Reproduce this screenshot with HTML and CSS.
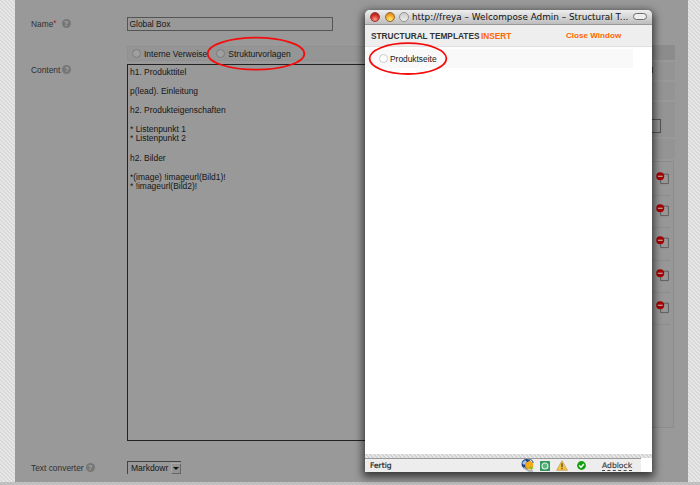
FILE: index.html
```
<!DOCTYPE html>
<html lang="en">
<head>
<meta charset="utf-8">
<title>Welcompose Admin</title>
<link rel="stylesheet" href="styles.css">
</head>
<body>
<svg class="defs" width="0" height="0">
  <symbol id="remove" viewBox="0 0 14 13">
    <path d="M4.6 2.2H12.4V11.6H4.6Z" fill="none" stroke="#5e5e5e"/>
    <circle cx="4.2" cy="4.3" r="4" fill="#a80000"/>
    <path d="M1.8 4.3H6.6" stroke="#c4a4a4" stroke-width="1.3"/>
  </symbol>
</svg>
<main class="page">
  <form class="form">
    <div class="row row-name">
      <div class="label"><span class="t-name">Name</span><span class="req">*</span><i class="help gap">?</i></div>
      <div class="text-input"><span>Global Box</span></div>
    </div>
    <div class="row row-tools">
      <div class="label"></div>
      <div class="tools"><i class="radio"></i><span class="t-int">Interne Verweise</span><i class="radio second"></i><span>Strukturvorlagen</span></div>
    </div>
    <div class="row row-content">
      <div class="label"><span class="t-content">Content</span><i class="help">?</i></div>
      <div class="textarea">h1. Produkttitel

p(lead). Einleitung

h2. Produkteigenschaften

* Listenpunkt 1
* Listenpunkt 2

h2. Bilder

*(image) !imageurl(Bild1)!
* !imageurl(Bild2)!</div>
    </div>
    <div class="row row-conv">
      <div class="label"><span class="t-conv">Text converter</span><i class="help">?</i></div>
      <div class="select"><span>Markdowr</span><b><i></i></b></div>
    </div>
  </form>
  <aside class="side">
    <div class="bar head"></div>
    <div class="bar cell"><i></i></div>
    <div class="bar mid"></div>
    <div class="bar field"><i></i></div>
    <div class="bar sub"></div>
    <div class="list">
      <div class="item"><svg><use href="#remove"/></svg></div>
      <div class="item"><svg><use href="#remove"/></svg></div>
      <div class="item"><svg><use href="#remove"/></svg></div>
      <div class="item"><svg><use href="#remove"/></svg></div>
      <div class="item"><svg><use href="#remove"/></svg></div>
    </div>
  </aside>
</main>
<div class="page-foot"></div>
<section class="window">
  <header class="titlebar">
    <i class="light red"></i><i class="light amber"></i><i class="light off"></i>
    <span class="title">http://freya – Welcompose Admin – Structural T...</span>
    <i class="pill"></i>
  </header>
  <div class="heading"><span class="h-main">STRUCTURAL TEMPLATES</span><span class="h-ins">INSERT</span><span class="close">Close Window</span></div>
  <div class="body"><div class="option"><i class="radio light-radio"></i><span>Produktseite</span></div></div>
  <div class="hatch"></div>
  <footer class="status">
    <span class="done">Fertig</span>
    <svg class="globe" width="14" height="13" viewBox="0 0 14 13"><circle cx="5.5" cy="5" r="5" fill="#1d4382"/><path d="M1 4L4 1L6 3L3 6Z" fill="#aac8e4"/><path d="M2.5 8.5L8 12H12" stroke="#a5aaaa" stroke-width="1.5" fill="none"/><path d="M4 4.5L9 1.5L12 4V9L8 10.5L4.5 8.5Z" fill="#f3ac16"/><path d="M8 1.3L9.3 0L12 2.5V4" stroke="#28497b" fill="none"/><path d="M10.2 7V11M8.2 9H12.2" stroke="#8ac51b" stroke-width="1.4"/></svg>
    <svg class="green" width="10" height="10" viewBox="0 0 10 10"><rect width="10" height="10" rx=".6" fill="#35975f"/><circle cx="5" cy="5" r="3" fill="#5cb580" stroke="#d3f0de" stroke-width="1.1"/></svg>
    <svg class="warn" width="12" height="11" viewBox="0 0 12 11"><path d="M6 .7L11.4 10.3H.6Z" fill="#f7c33c" stroke="#c1a05b" stroke-width=".8" stroke-linejoin="round"/><path d="M6 3.3V7.2M6 8V9.3" stroke="#5d4a20" stroke-width="1.3"/></svg>
    <svg class="ok" width="9" height="9" viewBox="0 0 9 9"><circle cx="4.5" cy="4.5" r="4.4" fill="#12a012"/><path d="M2.2 4.5L4 6.2L6.9 3" stroke="#fff" stroke-width="1.5" fill="none"/></svg>
    <span class="adblock">Adblock</span>
  </footer>
</section>
<svg class="rings" width="700" height="485" viewBox="0 0 700 485"><ellipse cx="256" cy="53.7" rx="48.3" ry="16" /><ellipse cx="408" cy="58.6" rx="38.4" ry="15.4"/></svg>
</body>
</html>
```
FILE: styles.css
```
* { box-sizing: border-box; }
body {
  margin: 0; width: 700px; height: 485px; overflow: hidden; position: relative;
  padding: 0 12px 0 15px;
  font: 8.4px/10px "Liberation Sans", Arial, sans-serif; color: #161616;
  background: linear-gradient(45deg, #d8d8d8 12.5%, #e8e8e8 12.5% 37.5%, #d8d8d8 37.5% 62.5%, #e8e8e8 62.5% 87.5%, #d8d8d8 87.5%) 0 0 / 4px 4px;
}
i { font-style: normal; }
span { white-space: nowrap; }
.defs { position: absolute; }
.page { display: flex; height: 482px; background: #999; }
.form { width: 614px; padding-top: 17px; }
.row { display: flex; }
.label { width: 112px; padding-left: 16px; display: flex; color: #303030; }
.label .help { margin-left: 2px; }
.label .help.gap { margin-left: 5px; }
.req { color: #b01818; line-height: 8px; }
.help {
  width: 9px; height: 9px; border-radius: 50%; background: #777; color: #aaa;
  font-size: 7px; font-weight: bold; line-height: 9px; text-align: center;
}
.row-name { height: 29px; }
.row-name .label { padding-top: 2px; }
.text-input { width: 206px; height: 14px; border: 1px solid #555; padding: 1px 0 0 1.5px; line-height: 10px; }
.row-tools { height: 18px; }
.tools { flex: 1; height: 15px; background: #959595; border: 1px solid #919191; display: flex; align-items: center; padding-left: 4px; font-size: 8.5px; }
.radio { width: 9px; height: 9px; border-radius: 50%; border: 1.6px solid #7c7c7c; background: #9f9f9f; margin-right: 3px; }
.radio.second { margin-left: 9px; }
.row-content { height: 397px; }
.row-content .label { padding-top: 1px; }
.textarea { flex: 1; height: 377px; border: 1px solid #222; padding: 2.5px 2px; font-size: 8.45px; line-height: 9.57px; white-space: pre; }
.row-conv .label { padding-top: 2px; }
.select { width: 54px; height: 13px; border: 1px solid #777; border-width: 1px 0 0 1px; border-color: #444; display: flex; padding-left: 3px; line-height: 13px; font-size: 8.5px; }
.select b { width: 10px; height: 11px; margin: 1px 0 0 auto; background: #939393; border: 1px solid #666; border-left-color: #aaa; border-top-color: #aaa; display: flex; align-items: center; justify-content: center; }
.select b i { border: 3px solid transparent; border-top-color: #111; border-bottom: 0; }
.side { width: 46px; padding-top: 45px; }
.bar { background: #949494; margin-bottom: 2px; }
.head { height: 15px; background: #8c8c8c; }
.cell { height: 18px; padding-top: 5px; }
.cell i { display: block; width: 24px; height: 6px; border-right: 1px solid #444; }
.mid { height: 18px; }
.field { height: 35px; padding-top: 17px; }
.field i { display: block; width: 32px; height: 14px; border: 1px solid #555; }
.sub { height: 20px; }
.list { height: 267px; border: 1px solid #8c8c8c; margin: 0 1px 0 0; background: #979797; padding: 2px 3px; }
.item { height: 32.2px; border-bottom: 1px solid #8d8d8d; padding: 8px 0 0 23px; }
.item svg { display: block; width: 14px; height: 13px; }
.page-foot { margin: 0 -12px 0 -15px; height: 3px; background: #999; opacity: .45; }
.window {
  position: absolute; left: 365px; top: 10px; width: 287px; height: 462px; background: #fff;
  border-radius: 5px 5px 0 0; box-shadow: 0 3px 8px 2px rgba(0,0,0,.65);
  display: flex; flex-direction: column; overflow: visible;
}
.titlebar { height: 15px; display: flex; align-items: center; padding: 0 5px 1px; border-bottom: 1px solid #999; border-radius: 5px 5px 0 0; background: linear-gradient(#eee, #bdbdbd); }
.light { flex: none; width: 10px; height: 10px; border-radius: 50%; margin-right: 4.5px; border: 1px solid #777; }
.red { background: radial-gradient(circle at 50% 80%, #ff9c8c, #d52e28 55%, #991d1a); border-color: #9b3834; }
.amber { background: radial-gradient(circle at 50% 80%, #ffee75, #f3a126 60%, #b86c14); border-color: #9b682d; }
.off { background: linear-gradient(#ccc, #eee); border-color: #929292; margin-right: 3px; }
.title { font: 8.85px/13px "DejaVu Sans", sans-serif; color: #111; width: 216px; padding-top: 1px; }
.pill { flex: none; width: 14px; height: 7px; border: 1.2px solid #6a6a6a; border-radius: 4px; background: #eee; margin-left: auto; }
.heading { height: 22px; background: #eee; border-bottom: 1px solid #e0e0e0; display: flex; align-items: center; padding-left: 6px; font-size: 8.3px; font-weight: bold; color: #333; }
.h-main { width: 110px; }
.h-ins { width: 85px; }
.close { font-size: 8.1px; }
.h-ins, .close { color: #f60; }
.body { flex: 1; padding-top: 2px; }
.option { width: 268px; height: 19px; background: #f9f9f9; display: flex; align-items: center; padding-left: 14px; }
.light-radio { border-color: #ccc; background: #fff; margin-right: 2px; }
.hatch { height: 4px; background: linear-gradient(45deg, #d0d0d0 12.5%, #e8e8e8 12.5% 37.5%, #d0d0d0 37.5% 62.5%, #e8e8e8 62.5% 87.5%, #d0d0d0 87.5%) 0 0 / 4px 4px; }
.status { height: 14px; margin-right: 11px; border-top: 1px solid #999; background: #ededed; display: flex; align-items: center; padding-left: 5px; font: 7.6px/10px "DejaVu Sans", sans-serif; color: #222; -webkit-text-stroke: .2px; }
.status svg { flex: none; }
.done { width: 151px; }
.globe { margin-right: 5px; }
.green { margin-right: 6px; }
.warn { margin-right: 9px; }
.ok { margin-right: 16px; }
.adblock { border-bottom: 1px dashed #444; line-height: 9px; color: #444; }
.rings { position: absolute; left: 0; top: 0; fill: none; stroke: #f50c0c; stroke-width: 1.8; }
```
